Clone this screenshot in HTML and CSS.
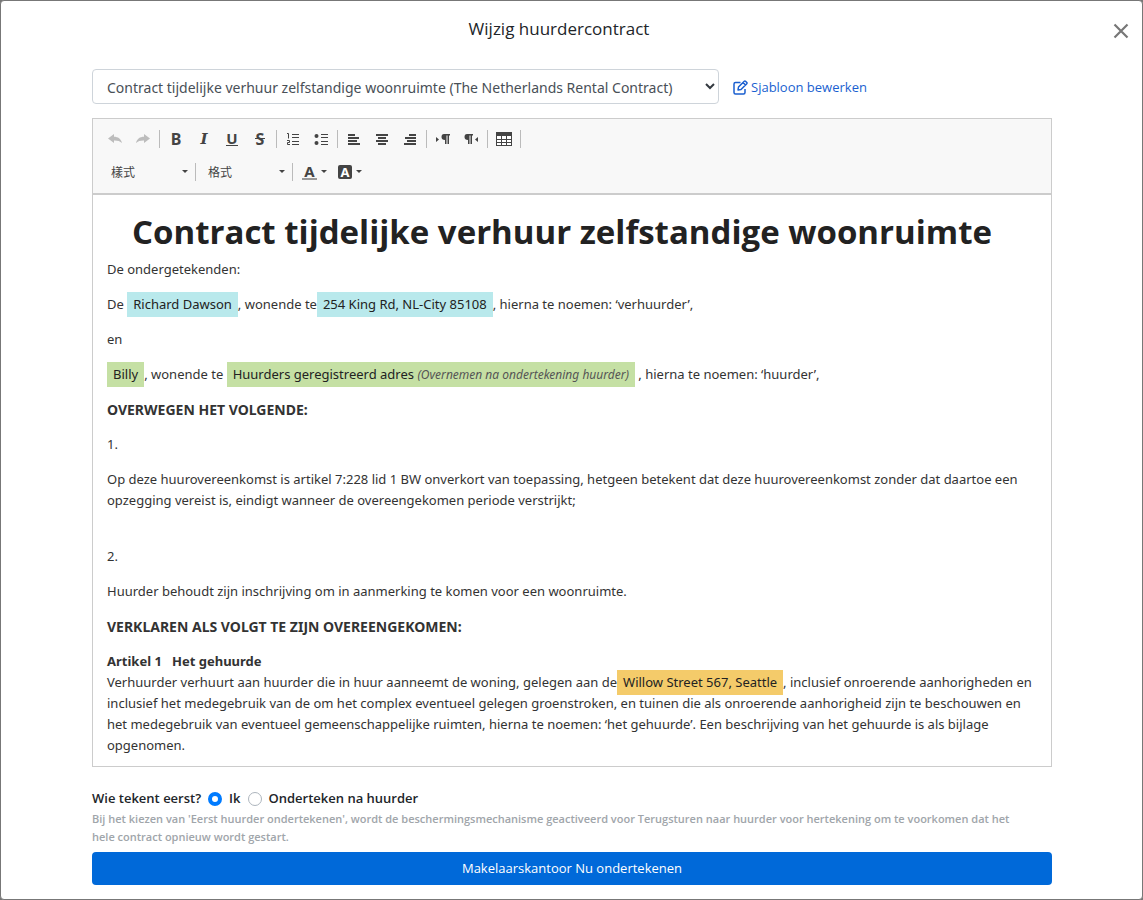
FILE: index.html
```html
<!DOCTYPE html>
<html lang="nl">
<head>
<meta charset="utf-8">
<meta name="viewport" content="width=device-width, initial-scale=1">
<title>Wijzig huurdercontract</title>
<link rel="stylesheet" href="styles.css">
</head>
<body>
<main class="modal">
  <header class="modal-header">
    <h1 class="modal-title">Wijzig huurdercontract</h1>
    <button class="close" type="button" aria-label="Sluiten"><svg width="16" height="16" viewBox="0 0 16 16"><path d="M1.5 1.5l13 13M14.5 1.5l-13 13" stroke="#777" stroke-width="2.2" fill="none"/></svg></button>
  </header>

  <div class="template-row">
    <div class="select-wrap">
      <select class="template-select" aria-label="Sjabloon">
        <option>Contract tijdelijke verhuur zelfstandige woonruimte (The Netherlands Rental Contract)</option>
      </select>
      <svg class="select-arrow" width="10" height="7" viewBox="0 0 10 7"><path d="M1 1l4 4 4-4" stroke="#343a40" stroke-width="2" fill="none"/></svg>
    </div>
    <a class="edit-link" href="#"><svg width="15" height="15" viewBox="0 0 15 15" fill="none" stroke="#1a5fd0" stroke-width="1.5" stroke-linejoin="round"><path d="M7.500 2.500H2.500Q1 2.500 1 4v8.500Q1 14 2.500 14h8Q12 14 12 12.500V9"/><path d="M5 10l.5-3L11.300 1.200q.6-.6 1.200 0l1.300 1.300q.6.6 0 1.200L8 9.500zM10 2.500L12.500 5"/></svg>Sjabloon bewerken</a>
  </div>

  <section class="editor">
    <div class="toolbar">
      <div class="tool-row">
        <button class="tool" type="button" aria-label="Undo" disabled><svg width="16" height="16" viewBox="0 0 16 16"><path d="M1 7.500L7 3v2.800c4 0 7 2 8 6.200-2-2-4.500-2.700-8-2.600V12z" fill="#bdbdbd"/></svg></button>
        <button class="tool" type="button" aria-label="Redo" disabled><svg width="16" height="16" viewBox="0 0 16 16"><path d="M15 7.500L9 3v2.800c-4 0-7 2-8 6.200 2-2 4.500-2.700 8-2.600V12z" fill="#bdbdbd"/></svg></button>
        <span class="sep"></span>
        <button class="tool letter" type="button" aria-label="Bold">B</button>
        <button class="tool letter italic" type="button" aria-label="Italic">I</button>
        <button class="tool letter" type="button" aria-label="Underline"><span class="under">U</span></button>
        <button class="tool letter" type="button" aria-label="Strikethrough"><span class="strike">S</span></button>
        <span class="sep"></span>
        <button class="tool" type="button" aria-label="Numbered list"><svg width="16" height="16" viewBox="0 0 16 16" fill="none" stroke="#444"><path d="M7 3.500h7M7 6.500h7M7 10.500h7M7 13.500h7M2 2.500h1.500v5M2 9.500h2.500v2h-2v2h2.500"/></svg></button>
        <button class="tool" type="button" aria-label="Bulleted list"><svg width="16" height="16" viewBox="0 0 16 16" fill="#444"><circle cx="3.500" cy="5" r="2"/><circle cx="3.500" cy="12" r="2"/><path d="M8 3h7v1H8zM8 6h7v1H8zM8 10h7v1H8zM8 13h7v1H8z"/></svg></button>
        <span class="sep"></span>
        <button class="tool" type="button" aria-label="Align left"><svg width="16" height="16" viewBox="0 0 16 16" fill="#444"><path d="M2 3h7v2H2zM2 6h11v2H2zM2 9h9v2H2zM2 12h12v2H2z"/></svg></button>
        <button class="tool" type="button" aria-label="Center"><svg width="16" height="16" viewBox="0 0 16 16" fill="#444"><path d="M2 3h12v2H2zM4 6h8v2H4zM2 9h12v2H2zM4 12h8v2H4z"/></svg></button>
        <button class="tool" type="button" aria-label="Align right"><svg width="16" height="16" viewBox="0 0 16 16" fill="#444"><path d="M7 3h7v2H7zM3 6h11v2H3zM5 9h9v2H5zM2 12h12v2H2z"/></svg></button>
        <span class="sep"></span>
        <button class="tool" type="button" aria-label="Left to right"><svg width="16" height="16" viewBox="0 0 16 16" fill="#444"><path d="M1 6v5l3-2.500zM9 3h6v1.500h-1V13h-1.500V4.500h-1V13H10V9Q6.500 9 6.500 6T9 3z"/></svg></button>
        <button class="tool" type="button" aria-label="Right to left"><svg width="16" height="16" viewBox="0 0 16 16" fill="#444"><path d="M15 6v5l-3-2.500zM4 3h6v1.500H9V13H7.500V4.500h-1V13H5V9Q1.500 9 1.500 6T4 3z"/></svg></button>
        <span class="sep"></span>
        <button class="tool" type="button" aria-label="Table"><svg width="16" height="16" viewBox="0 0 16 16"><path d="M0 1h16v14H0z" fill="#444"/><path d="M1 5h4v3H1zM6 5h4v3H6zM11 5h4v3h-4zM1 9h4v2H1zM6 9h4v2H6zM11 9h4v2h-4zM1 12h4v2H1zM6 12h4v2H6zM11 12h4v2h-4z" fill="#fff"/></svg></button>
        <span class="sep"></span>
      </div>
      <div class="tool-row">
        <button class="combo" type="button"><span>樣式</span><i class="caret"></i></button>
        <span class="sep"></span>
        <button class="combo" type="button"><span>格式</span><i class="caret"></i></button>
        <span class="sep"></span>
        <button class="color-tool" type="button" aria-label="Text color"><span class="text-color">A</span><i class="caret"></i></button>
        <button class="color-tool" type="button" aria-label="Background color"><span class="back-color">A</span><i class="caret"></i></button>
      </div>
    </div>

    <article class="document">
      <h2>Contract tijdelijke verhuur zelfstandige woonruimte</h2>
      <p>De ondergetekenden:</p>
      <p>De <span class="field blue">Richard Dawson</span>, wonende te<span class="field blue">254 King Rd, NL-City 85108</span>, hierna te noemen: ‘verhuurder’,</p>
      <p>en</p>
      <p><span class="field green">Billy</span>, wonende te <span class="field green">Huurders geregistreerd adres <em>(Overnemen na ondertekening huurder)</em></span> , hierna te noemen: ‘huurder’,</p>
      <p class="clause">OVERWEGEN HET VOLGENDE:</p>
      <p>1.</p>
      <p>Op deze huurovereenkomst is artikel 7:228 lid 1 BW onverkort van toepassing, hetgeen betekent dat deze huurovereenkomst zonder dat daartoe een opzegging vereist is, eindigt wanneer de overeengekomen periode verstrijkt;</p>
      <p class="second">2.</p>
      <p>Huurder behoudt zijn inschrijving om in aanmerking te komen voor een woonruimte.</p>
      <p class="clause">VERKLAREN ALS VOLGT TE ZIJN OVEREENGEKOMEN:</p>
      <p><strong>Artikel 1 &nbsp; Het gehuurde</strong><br>Verhuurder verhuurt aan huurder die in huur aanneemt de woning, gelegen aan de<span class="field orange">Willow Street 567, Seattle</span>, inclusief onroerende aanhorigheden en inclusief het medegebruik van de om het complex eventueel gelegen groenstroken, en tuinen die als onroerende aanhorigheid zijn te beschouwen en het medegebruik van eventueel gemeenschappelijke ruimten, hierna te noemen: ‘het gehuurde’. Een beschrijving van het gehuurde is als bijlage opgenomen.</p>
    </article>
  </section>

  <footer class="signing">
    <div class="who" role="radiogroup" aria-labelledby="who-label">
      <span id="who-label">Wie tekent eerst?</span>
      <input class="radio" type="radio" name="first" id="first-me" checked><label for="first-me">Ik</label>
      <input class="radio" type="radio" name="first" id="first-tenant"><label for="first-tenant">Onderteken na huurder</label>
    </div>
    <p class="hint">Bij het kiezen van 'Eerst huurder ondertekenen', wordt de beschermingsmechanisme geactiveerd voor Terugsturen naar huurder voor hertekening om te voorkomen dat het hele contract opnieuw wordt gestart.</p>
    <button class="submit" type="button">Makelaarskantoor Nu ondertekenen</button>
  </footer>
</main>
</body>
</html>
```
FILE: styles.css
```css
* { box-sizing: border-box; }
body {
  margin: 0;
  background: #777;
  color: #212529;
  font-family: "Open Sans", "Noto Sans", "Noto Sans CJK TC", sans-serif;
  font-size: 13px;
  line-height: 21px;
}
button, select, input { font: inherit; color: inherit; margin: 0; }
button { border: 0; padding: 0; background: none; }
svg { display: block; }
.modal {
  min-height: 100vh;
  padding: 0 90px 14px 91px;
  background: #fff;
  border: 1px solid #777;
  border-radius: 4px;
}
.modal-header { position: relative; padding-top: 14px; height: 68px; }
.modal-title { margin: 0; text-align: center; font-size: 17px; font-weight: 400; line-height: 28px; padding-right: 26px; }
.close { position: absolute; top: 22px; right: -77px; }

.template-row { display: flex; align-items: center; gap: 14px; margin-bottom: 14px; }
.select-wrap { position: relative; flex: 0 1 627px; }
.template-select {
  appearance: none;
  display: block;
  width: 100%;
  height: 35px;
  padding: 1px 28px 0 14px;
  border: 1px solid #ced4da;
  border-radius: 4px;
  background: #fff;
  color: #495057;
  font-family: "Noto Sans", sans-serif;
  font-size: 14px;
}
.select-arrow { position: absolute; right: 4px; top: 14px; pointer-events: none; }
.edit-link { display: flex; align-items: center; gap: 3px; padding-top: 1px; color: #1a5fd0; text-decoration: none; }

.editor { border: 1px solid #ccc; }
.toolbar { padding: 6px 8px 8px; background: #f8f8f8; border-bottom: 2px solid #ccc; color: #444; }
.tool-row { display: flex; align-items: center; height: 27px; }
.tool-row + .tool-row { margin-top: 6px; }
.tool { display: flex; align-items: center; justify-content: center; width: 28px; height: 27px; }
.letter { font-family: "Noto Sans", sans-serif; font-size: 16px; font-weight: 700; line-height: 20px; }
.italic { font-family: "DejaVu Serif", serif; font-style: italic; font-size: 15px; }
.under { border-bottom: 1px solid #444; font-size: 15px; line-height: 14px; }
.strike { padding: 0 1px; background: linear-gradient(#444, #444) center / 100% 1px no-repeat; }
.sep { width: 1px; height: 18px; margin: 0 2px; background: #bbb; }
.combo { display: flex; align-items: center; justify-content: space-between; width: 92px; height: 27px; padding: 0 5px 0 10px; font-family: "Noto Sans CJK TC", sans-serif; font-size: 12px; }
.caret { border: 3px solid transparent; border-top-color: #444; border-bottom: 0; }
.color-tool { display: flex; align-items: center; gap: 4px; height: 27px; padding: 0 4px 0 7px; font-family: "Noto Sans", sans-serif; font-weight: 700; }
.text-color { width: 15px; border-bottom: 2px solid #999; font-size: 15px; line-height: 14px; }
.back-color { width: 14px; height: 14px; border-radius: 2px; background: #444; color: #fff; line-height: 14px; }

.document { padding: 16px 14px 10px; color: #333; font-family: "Noto Sans", sans-serif; }
.document h2 { margin: 0 0 7px; text-align: center; font-family: "Open Sans", sans-serif; font-size: 33px; line-height: 41px; color: #222; padding-right: 20px; }
.document p { margin: 0 0 14px; }
.document p:last-child { margin: 0; }
.document .second { margin-top: 35px; }
.document .clause { font-size: 14px; font-weight: 700; }
.field { padding: 3px 6px 4px; color: #222; }
.blue { background: #b9e9ec; }
.green { background: #c5e0a4; }
.orange { background: #f4cb6a; }
.field em { font-size: 12px; color: #555; }

.signing { padding-top: 21px; }
.who { display: flex; align-items: center; gap: 7px; font-weight: 600; }
.radio { appearance: none; width: 14px; height: 14px; border: 1px solid #adb5bd; border-radius: 50%; background: #fff; }
.radio:checked { border: 4px solid #007bff; }
.hint { margin: 1px 0 6px; padding-right: 20px; font-size: 11px; font-weight: 600; line-height: 18px; color: #a0a5aa; }
.submit { display: block; width: 100%; height: 33px; border-radius: 4px; background: #0069d9; color: #fff; }
```
